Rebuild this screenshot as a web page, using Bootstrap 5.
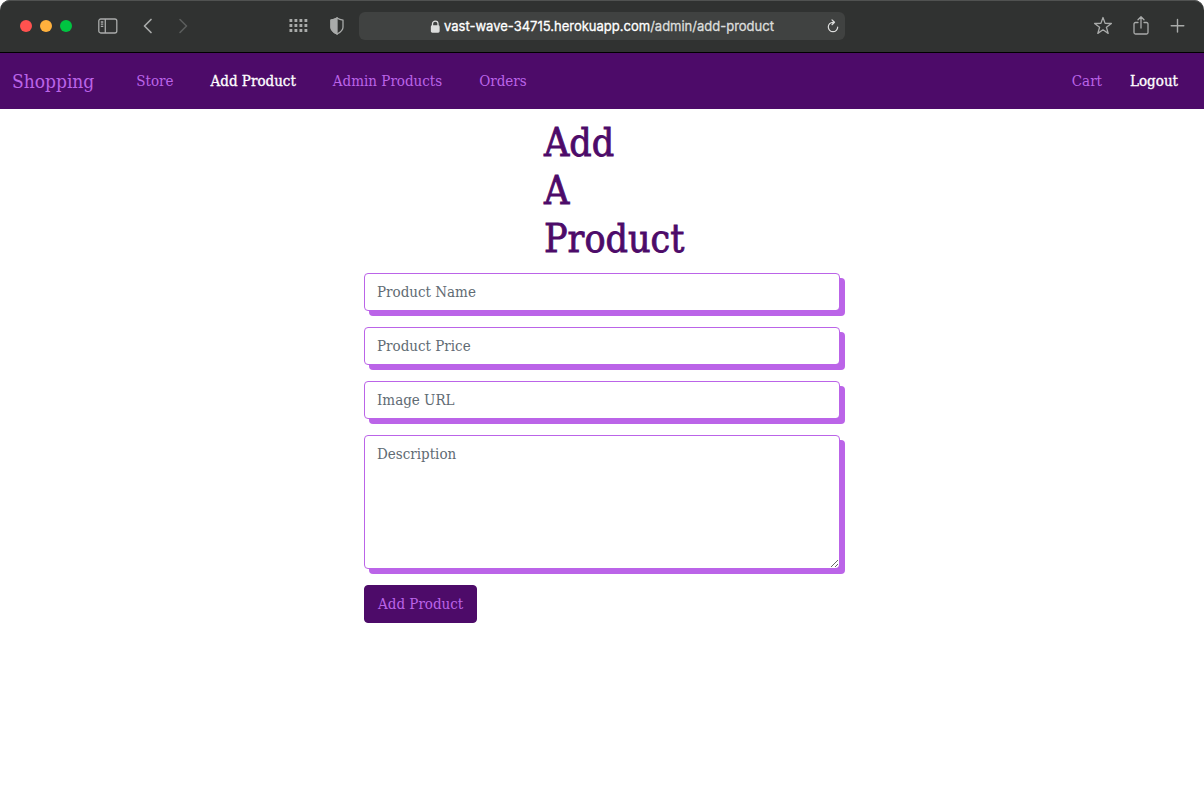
<!DOCTYPE html>
<html lang="en">
<head>
<meta charset="utf-8">
<meta name="viewport" content="width=device-width, initial-scale=1">
<title>Add Product</title>
<link href="https://cdn.jsdelivr.net/npm/bootstrap@5.3.0/dist/css/bootstrap.min.css" rel="stylesheet">
<style>
:root { --deep: #4d0b69; --orchid: #bb64e8; }
body { font-family: "DejaVu Serif Condensed", "DejaVu Serif", serif; font-size: 15px; line-height: 24px; color: var(--deep); background: #fff; }

/* browser window frame */
.chrome { display: grid; grid-template-columns: 1fr 486px 1fr; height: 53px; background: #303231; box-shadow: inset 0 1px 0 #505251; border-bottom: 1px solid #000; border-radius: 10px 10px 0 0; color: #a9abaa; }
.chrome button { display: flex; padding: 0; border: 0; background: none; color: inherit; }
.chrome svg { display: block; fill: none; stroke: currentColor; }
.lights { gap: 8px; margin-right: 26px; }
.light { width: 12px; height: 12px; border-radius: 50%; }
.chrome-start { padding-left: 20px; padding-right: 15px; }
.chrome-tools { gap: 22px; }
.chrome-end { padding-right: 19px; gap: 20px; }
.address { height: 28px; border-radius: 6px; background: #404241; color: #dcdddc; font: 400 13px/28px Inter, "Liberation Sans", sans-serif; -webkit-text-stroke: .3px; padding: 0 6px 0 18px; }
.address .host { color: #fff; }

/* site navigation */
.site-nav { --bs-navbar-padding-y: 0; height: 56px; background: var(--deep); }
.site-nav a { color: var(--orchid); text-decoration: none; white-space: nowrap; }
.site-nav .site-brand { font-size: 19px; line-height: 30px; margin-right: 42px; }
.site-nav a.active { color: #fff; -webkit-text-stroke: .3px #fff; }
.main-links { gap: 37px; }
.side-links { gap: 28px; padding-right: 14px; }

/* product form */
.page-title { width: 116px; margin: 10px auto; font-size: 39px; line-height: 48px; font-weight: 400; -webkit-text-stroke: .8px var(--deep); }
.product-form { max-width: 476px; gap: 16px; }
.product-form .form-control { font-size: 15px; line-height: 24px; border-color: var(--orchid); border-radius: 4px; box-shadow: 5px 5px 0 var(--orchid); }
.product-form .form-control::placeholder { color: #5f6b73; opacity: 1; }
.product-form textarea { height: 134px; }
.btn-deep { --bs-btn-color: var(--orchid); --bs-btn-bg: var(--deep); --bs-btn-border-color: var(--deep); --bs-btn-hover-color: #fff; --bs-btn-hover-bg: var(--deep); --bs-btn-font-size: 15px; --bs-btn-padding-x: 13px; --bs-btn-border-radius: 4px; line-height: 24px; }
</style>
</head>
<body>
<header class="chrome align-items-center">
  <div class="chrome-start d-flex align-items-center">
    <div class="lights d-flex">
      <button class="light" style="background:#ff524f" aria-label="Close"></button>
      <button class="light" style="background:#ffb13d" aria-label="Minimize"></button>
      <button class="light" style="background:#00c441" aria-label="Zoom"></button>
    </div>
    <button aria-label="Sidebar"><svg width="20" height="16" viewBox="0 0 20 16" stroke-width="1.3"><rect x=".8" y="1" width="18" height="14" rx="2"/><path d="M7.3 1v14M2.8 4h2.5M2.8 6.2h2.5M2.8 8.4h2.5"/></svg></button>
    <button class="ms-4" aria-label="Back"><svg width="12" height="16" viewBox="0 0 12 16" stroke-width="1.7" stroke-linecap="round" stroke-linejoin="round"><path d="M9 1.5 2.5 8 9 14.5"/></svg></button>
    <button class="ms-4" aria-label="Forward" disabled><svg width="12" height="16" viewBox="0 0 12 16" stroke-width="1.6" stroke-linecap="round" stroke-linejoin="round"><path stroke="#5b5d5c" d="M2 1.5 8.500 8 2 14.500"/></svg></button>
    <div class="chrome-tools d-flex align-items-center ms-auto">
      <button aria-label="Top sites"><svg width="20" height="14" viewBox="0 0 20 14" stroke-width="2.8" stroke-dasharray="2.8 2.2"><path d="M1.500 1.500h18M1.500 6.500h18M1.500 11.500h18"/></svg></button>
      <button aria-label="Privacy report"><svg width="14" height="18" viewBox="0 0 14 18" stroke-width="1.3"><path d="M7 1c2 1.3 4 1.9 6 2.2v7C13 13 10 15.400 7 17 4 15.400 1 13 1 10.200v-7C3 2.900 5 2.300 7 1z"/><path d="M7 1v16C4 15.400 1 13 1 10.200v-7C3 2.900 5 2.300 7 1z" fill="currentColor"/></svg></button>
    </div>
  </div>
  <div class="address d-flex align-items-center">
    <div class="flex-grow-1 d-flex align-items-center justify-content-center">
      <svg class="me-1" width="10" height="13" viewBox="0 0 10 13" stroke-width="1.3"><rect x="1.500" y="6" width="7.500" height="6" rx=".8" fill="currentColor"/><path d="M2.500 6V3.800a2.750 2.750 0 0 1 5.500 0V6"/></svg>
      <span><span class="host">vast-wave-34715.herokuapp.com</span>/admin/add-product</span>
    </div>
    <button aria-label="Reload"><svg width="12" height="14" viewBox="0 0 12 14" stroke-width="1.2" stroke-linecap="round" stroke-linejoin="round"><path d="M6.800 3.300H6a4.700 4.700 0 1 0 4.700 4.700M5 .9l2.500 2.400L5 5.700"/></svg></button>
  </div>
  <div class="chrome-end d-flex align-items-center justify-content-end">
    <button aria-label="Bookmark"><svg width="20" height="20" viewBox="0 0 20 20" stroke-width="1.300" stroke-linejoin="round"><path d="m10 1.500 2.100 5.900 6.300.1-5 3.800 1.800 6.100L10 13.800l-5.200 3.600 1.800-6.100-5-3.800 6.300-.1z"/></svg></button>
    <button aria-label="Share"><svg width="16" height="20" viewBox="0 0 16 20" stroke-width="1.300" stroke-linecap="round" stroke-linejoin="round"><path d="M5 6.500H2.500a1.500 1.500 0 0 0-1.500 1.500v8.500a1.500 1.500 0 0 0 1.500 1.500h11a1.500 1.500 0 0 0 1.500-1.500V8a1.500 1.500 0 0 0-1.500-1.500H11M8 12V1M5 3.800l3-3 3 3"/></svg></button>
    <button aria-label="New tab"><svg width="16" height="16" viewBox="0 0 16 16" stroke-width="1.400" stroke-linecap="round"><path d="M8.500 1.500v12.500M2.200 7.700h12.600"/></svg></button>
  </div>
</header>

<nav class="navbar site-nav">
  <div class="container-fluid flex-nowrap justify-content-start">
    <a class="site-brand" href="#">Shopping</a>
    <div class="main-links d-flex">
      <a href="#">Store</a>
      <a class="active" href="#" aria-current="page">Add Product</a>
      <a href="#">Admin Products</a>
      <a href="#">Orders</a>
    </div>
    <div class="side-links d-flex ms-auto">
      <a href="#">Cart</a>
      <a class="active" href="#">Logout</a>
    </div>
  </div>
</nav>

<main>
  <h1 class="page-title">Add<br>A<br>Product</h1>
  <form class="product-form d-flex flex-column mx-auto">
    <input class="form-control" type="text" placeholder="Product Name" aria-label="Product Name">
    <input class="form-control" type="text" placeholder="Product Price" aria-label="Product Price">
    <input class="form-control" type="text" placeholder="Image URL" aria-label="Image URL">
    <textarea class="form-control" placeholder="Description" aria-label="Description"></textarea>
    <button class="btn btn-deep align-self-start" type="button">Add Product</button>
  </form>
</main>
<script src="https://cdn.jsdelivr.net/npm/bootstrap@5.3.0/dist/js/bootstrap.bundle.min.js"></script>
</body>
</html>
